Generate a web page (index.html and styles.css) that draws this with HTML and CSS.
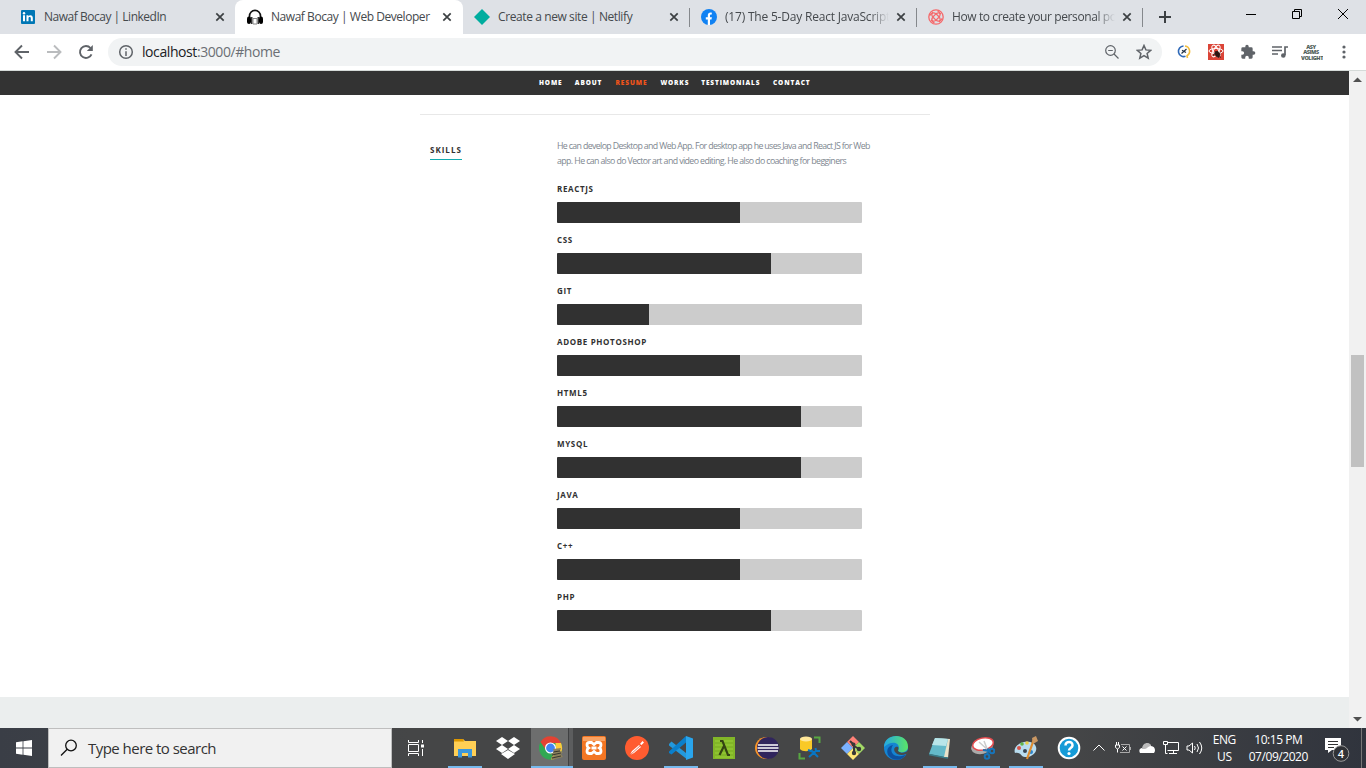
FILE: index.html
```html
<!DOCTYPE html>
<html lang="en">
<head>
<meta charset="utf-8">
<title>Nawaf Bocay | Web Developer</title>
<link rel="stylesheet" href="styles.css">
</head>
<body>
<div class="desktop">
  <header class="tabstrip">
    <div class="tab first">
      <svg class="favicon" viewBox="0 0 16 16"><rect x="1" y="1" width="14" height="14" rx="1" fill="#0077b5"/><path d="M3 6.300h2v6H3zM6.500 6.300h1.900v.9c1-1.600 4.400-1.500 4.400 1.600v3.500h-2V9.100c0-1.600-2.300-1.500-2.300 0v3.200h-2z" fill="#fff"/><circle cx="4" cy="4.300" r="1.200" fill="#fff"/></svg>
      <span class="tab-title t1">Nawaf Bocay | LinkedIn</span>
      <svg class="close" viewBox="0 0 16 16"><path d="M4.300 4.300l7.400 7.400M11.700 4.300l-7.400 7.400"/></svg>
    </div>
    <div class="tab active">
      <svg class="favicon" viewBox="0 0 16 16"><path d="M2.500 9V7a5.500 5.700 0 0 1 11 0v2" fill="none" stroke="#111" stroke-width="1.700"/><rect y="7.500" width="4" height="7.500" rx="2" fill="#000"/><rect x="12" y="7.500" width="4" height="7.500" rx="2" fill="#000"/><path d="M4 8v7h1.500V8zM10.500 8v7H12V8z" fill="#333"/><path d="M6 9.500h4V15H6z" fill="none" stroke="#888"/></svg>
      <span class="tab-title t2">Nawaf Bocay | Web Developer</span>
      <svg class="close" viewBox="0 0 16 16"><path d="M4.300 4.300l7.400 7.400M11.700 4.300l-7.400 7.400"/></svg>
    </div>
    <div class="tab sep">
      <svg class="favicon" viewBox="0 0 16 16"><path d="M8 0l8 8-8 8-8-8z" fill="#00ad9f"/></svg>
      <span class="tab-title t3">Create a new site | Netlify</span>
      <svg class="close" viewBox="0 0 16 16"><path d="M4.300 4.300l7.400 7.400M11.700 4.300l-7.400 7.400"/></svg>
    </div>
    <div class="tab sep">
      <svg class="favicon" viewBox="0 0 16 16"><circle cx="8" cy="8" r="8" fill="#1182f3"/><path d="M6.800 16v-5.500h-2V8.200h2V6.500c0-2.200 1.400-3.200 4-2.800v1.900C9.300 5.500 9 5.800 9 6.800v1.400h1.900l-.4 2.300H9V16z" fill="#fff"/></svg>
      <span class="tab-title fade t4">(17) The 5-Day React JavaScript</span>
      <svg class="close" viewBox="0 0 16 16"><path d="M4.300 4.300l7.400 7.400M11.700 4.300l-7.400 7.400"/></svg>
    </div>
    <div class="tab sep last">
      <svg class="favicon" viewBox="0 0 16 16"><g fill="none" stroke="#f5696b" stroke-width="1.300"><circle cx="8" cy="8" r="7.200"/><path d="M8 4.800L11.200 8 8 11.200 4.800 8z"/><path id="petal" d="M8 4.800C5.500 3 3 4 2 6.500M8 4.800c2-1.500 4-1.200 5 .2"/><use href="#petal" transform="rotate(90 8 8)"/><use href="#petal" transform="rotate(180 8 8)"/><use href="#petal" transform="rotate(270 8 8)"/></g></svg>
      <span class="tab-title fade t5">How to create your personal po</span>
      <svg class="close" viewBox="0 0 16 16"><path d="M4.300 4.300l7.400 7.400M11.700 4.300l-7.400 7.400"/></svg>
    </div>
    <svg class="newtab" viewBox="0 0 16 16"><path d="M8 2v12M2 8h12" stroke="#3c4043" stroke-width="2"/></svg>
    <div class="window-buttons">
      <svg viewBox="0 0 12 12"><path d="M1 6.500h10"/></svg>
      <svg viewBox="0 0 12 12"><path d="M3.500 3.500v-2h7v7h-2M1.500 3.500h7v7h-7z"/></svg>
      <svg viewBox="0 0 12 12"><path d="M1 1l10 10M11 1L1 11"/></svg>
    </div>
  </header>

  <div class="toolbar">
    <div class="history">
      <svg viewBox="0 0 16 16"><path d="M15 8H2M8 1.500L1.500 8 8 14.500"/></svg>
      <svg class="disabled" viewBox="0 0 16 16"><path d="M1 8h13M8 1.500L14.500 8 8 14.500"/></svg>
      <svg viewBox="0 0 16 16"><path d="M13.500 10.300A6 6 0 1 1 12.500 4"/><path d="M14.800 1v6h-6z" fill="#5f6368" stroke="none"/></svg>
    </div>
    <div class="omnibox">
      <svg class="info" viewBox="0 0 16 16"><circle cx="8" cy="8" r="6.300"/><path d="M8 7.200V12M8 4.200v1.600"/></svg>
      <span class="url"><b>localhost</b>:3000/#home</span>
      <svg class="lens" viewBox="0 0 16 16"><circle cx="6.500" cy="6.500" r="4.800"/><path d="M10 10l4.500 4.500M4.200 6.500h4.600"/></svg>
      <svg class="star" viewBox="0 0 16 16"><path d="M8 1.500l1.900 4.400 4.800.4-3.600 3.200 1.100 4.700L8 11.700l-4.200 2.500 1.100-4.700-3.600-3.200 4.800-.4z"/></svg>
    </div>
    <div class="extensions">
      <svg viewBox="0 0 16 16"><g fill="none" stroke-width="1.600"><path d="M7.500 2A5.300 5.300 0 1 0 9.500 12.300" stroke="#2d68b8"/><path d="M9 2a5.300 5.300 0 0 1 2 9.800l.5 2.200" stroke="#f3bd3c"/></g><path d="M5.500 9.500l5-4.500M6 6.200l4 2.300" stroke="#25364a" stroke-width="1.200"/></svg>
      <svg viewBox="0 0 16 16"><path d="M0 0h16v16H0z" fill="#db4437"/><g fill="none" stroke="#fff" stroke-width="1"><ellipse cx="8" cy="7" rx="7" ry="2.600"/><ellipse cx="8" cy="7" rx="6.500" ry="2.600" transform="rotate(60 8 7)"/><ellipse cx="8" cy="7" rx="6.500" ry="2.600" transform="rotate(120 8 7)"/></g><path d="M7.500 7.500h2.500l2 2.500-1 3.500-2.500-1-2-2.500zM6 10l-1 2M12 8.500l1-1M11.500 12.500l1.500 1" fill="#2b1512" stroke="#2b1512" stroke-width=".8"/></svg>
      <svg viewBox="0 0 24 24"><path fill="#5f6368" d="M20.500 11H19V7a2 2 0 0 0-2-2h-4V3.500a2.500 2.500 0 0 0-5 0V5H4a2 2 0 0 0-2 2v3.800h1.500a2.700 2.700 0 0 1 0 5.400H2V20a2 2 0 0 0 2 2h3.800v-1.500a2.700 2.700 0 0 1 5.400 0V22H17a2 2 0 0 0 2-2v-4h1.500a2.500 2.500 0 0 0 0-5z"/></svg>
      <svg viewBox="0 0 16 16"><path d="M0 3h10M0 6.500h10M0 10h6M13 11V3h3" fill="none" stroke="#5f6368" stroke-width="1.700"/><circle cx="11.300" cy="11.500" r="2.300" fill="#5f6368"/></svg>
      <svg class="avatar" viewBox="0 0 22 20"><text x="10" y="6.500">ASY</text><text x="10" y="12">ASIMS</text><text x="11" y="17.500">VOLIGHT</text></svg>
      <svg viewBox="0 0 16 16"><g fill="#5f6368"><circle cx="8" cy="3" r="1.600"/><circle cx="8" cy="8" r="1.600"/><circle cx="8" cy="13" r="1.600"/></g></svg>
    </div>
  </div>

  <div class="viewport">
    <main class="page">
      <nav class="nav">
        <a style="width:23px">HOME</a><a style="width:28px">ABOUT</a><a class="current" style="width:32px">RESUME</a><a style="width:28px">WORKS</a><a style="width:59px">TESTIMONIALS</a><a style="width:37px">CONTACT</a>
      </nav>
      <section class="skills">
        <h1><span>SKILLS</span></h1>
        <div class="skills-main">
          <p><span class="l1">He can develop Desktop and Web App. For desktop app he uses Java and React JS for Web</span><br><span class="l2">app. He can also do Vector art and video editing. He also do coaching for begginers</span></p>
          <ul>
            <li><em>REACTJS</em><div class="bar"><i style="width:60%"></i></div></li>
            <li><em>CSS</em><div class="bar"><i style="width:70%"></i></div></li>
            <li><em>GIT</em><div class="bar"><i style="width:30%"></i></div></li>
            <li><em>ADOBE PHOTOSHOP</em><div class="bar"><i style="width:60%"></i></div></li>
            <li><em>HTML5</em><div class="bar"><i style="width:80%"></i></div></li>
            <li><em>MYSQL</em><div class="bar"><i style="width:80%"></i></div></li>
            <li><em>JAVA</em><div class="bar"><i style="width:60%"></i></div></li>
            <li><em>C++</em><div class="bar"><i style="width:60%"></i></div></li>
            <li><em>PHP</em><div class="bar"><i style="width:70%"></i></div></li>
          </ul>
        </div>
      </section>
      <div class="next-section"></div>
    </main>
    <div class="scrollbar">
      <svg viewBox="0 0 17 17"><path d="M4 11h9L8.500 6.500z" fill="#505050"/></svg>
      <div class="thumb"></div>
      <svg class="down" viewBox="0 0 17 17"><path d="M4 6h9l-4.500 4.500z" fill="#505050"/></svg>
    </div>
  </div>

  <footer class="taskbar">
    <div class="start"><svg viewBox="0 0 16 16"><path d="M0 2.300L6.600 1.300V7.600H0zM7.400 1.200L16 0v7.600H7.400zM0 8.400h6.600v6.300L0 13.800zM7.400 8.400H16V16l-8.600-1.200z" fill="#fff"/></svg></div>
    <div class="search">
      <svg viewBox="0 0 18 18"><circle cx="11" cy="6.500" r="5.300"/><path d="M7.200 10.300L1 16.500"/></svg>
      <span>Type here to search</span>
    </div>
    <div class="taskview"><svg viewBox="0 0 18 16"><path d="M1.500 0v2.500h10V0M1.500 16v-2.500h10V16M1.500 4.500h10v7h-10zM15.500 0v3M15.500 9v7" fill="none" stroke="#fff"/><path d="M14 4.500h3v3h-3z" fill="#fff"/></svg></div>
    <div class="apps">
      <div class="app run"><svg viewBox="0 0 24 24"><path d="M1 3h9l2 2h11v15H1z" fill="#ffcf55"/><path d="M1 3h9l1 2.500H1z" fill="#dd9700"/><path d="M5 13h14v8.500h-4V17H9v4.500H5z" fill="#3b97dc"/></svg></div>
      <div class="app"><svg viewBox="0 0 24 24"><path d="M6 1l6 4-6 4-6-4zM18 1l6 4-6 4-6-4zM6 9l6 4-6 4-6-4zM18 9l6 4-6 4-6-4zM12 14l7 4-7 5-7-5z" fill="#fff"/></svg></div>
      <div class="app run chrome"><svg viewBox="0 0 24 24"><circle cx="11.500" cy="12" r="11.500" fill="#31a853"/><path d="M1.500 6A11.500 11.500 0 0 1 22 7H12l-5 7z" fill="#e34234"/><path d="M22 7a11.500 11.500 0 0 1-10 16.500L16.500 14V7z" fill="#fbcb3b"/><circle cx="11.500" cy="12" r="5.500" fill="#fff"/><circle cx="11.500" cy="12" r="4.400" fill="#4285f4"/><path d="M14 13l8-1-1 3 3 1-2 2 2 3-11 3-1-3 3-1-3-2 3-2z" fill="#8b805c"/><path d="M14 16l7-1M13 19l9-2M13 22l9-2" stroke="#38392f"/></svg></div>
      <div class="app"><svg viewBox="0 0 24 24"><rect width="24" height="24" rx="2" fill="#f37623"/><path d="M1 1h22v4H1z" fill="#f9a263"/><path d="M7.500 6.500h2l2.500 2 2.500-2h2q2.500 0 2.500 2.500 0 2-1.500 3 1.500 1 1.500 3 0 2.500-2.500 2.500h-2l-2.500-2-2.500 2h-2Q5 17.500 5 15q0-2 1.500-3Q5 11 5 9q0-2.500 2.500-2.500zM9.500 12h5" fill="none" stroke="#fff" stroke-width="2.800"/></svg></div>
      <div class="app"><svg viewBox="0 0 24 24"><circle cx="12" cy="12" r="12" fill="#ff5c30"/><path d="M5 19l2-4 7-6 2 2-7 6zM15 8l2.500-3 1.500 1.500L16.500 9z" fill="#fff"/><path d="M5 19l11-10" stroke="#e54320" stroke-width=".7"/></svg></div>
      <div class="app run"><svg viewBox="0 0 24 24"><path d="M0 8l2.500-2.500L17 17v5.500L0 9.500z" fill="#2398dc"/><path d="M0 15.500L17 0v6.500L2.500 18.500 0 17z" fill="#0a7fcb"/><path d="M17 0l7 2.500v19L17 24z" fill="#29a5ed"/></svg></div>
      <div class="app"><svg viewBox="0 0 24 24"><path d="M1 1h22v22H1z" fill="#82b628"/><path d="M3 5h18M3 9h18M3 13h18M3 17h18M3 21h18" stroke="#9bd039"/><path d="M8 5h2.500L16 19h2M12 10L7.500 19" fill="none" stroke="#344313" stroke-width="2.200"/></svg></div>
      <div class="app"><svg viewBox="0 0 24 24"><circle cx="11" cy="12" r="11" fill="#f79428"/><circle cx="13" cy="12" r="11" fill="#30255d"/><path d="M3 9h20M2.500 12h21M3 15h20" stroke="#fff" stroke-width="1.700"/></svg></div>
      <div class="app"><svg viewBox="0 0 24 24"><path d="M2 3v10c2 3 10 3 12 0V3z" fill="#f9c927"/><ellipse cx="8" cy="3" rx="6" ry="2.500" fill="#ffe799"/><path d="M16 1.500h5.500V7M1.500 17v5.500H7" fill="none" stroke="#58a742" stroke-width="2"/><path d="M11 21l8-7M13 14l7 7M17.500 12l.5 3 4 0M10 14l4 1.500" fill="none" stroke="#0876c5" stroke-width="2"/></svg></div>
      <div class="app"><svg viewBox="0 0 24 24"><path d="M12 0l6 6-6 6-6-6z" fill="#ff8178"/><path d="M6 6l6 6-6 6-6-6z" fill="#7bb1ff"/><path d="M18 6l6 6-6 6-6-6z" fill="#a3d967"/><path d="M12 12l6 6-6 6-6-6z" fill="#ffe676"/><path d="M9 5l4 4v9M13 10l5 3" fill="none" stroke="#383838" stroke-width="2"/><g fill="#383838"><circle cx="12.500" cy="8.500" r="2"/><circle cx="13" cy="17" r="2.200"/><circle cx="18" cy="13" r="2.200"/></g></svg></div>
      <div class="app"><svg viewBox="0 0 24 24"><defs><linearGradient id="edge"><stop stop-color="#24a8e4"/><stop offset="1" stop-color="#5be565"/></linearGradient></defs><circle cx="12" cy="12" r="12" fill="#1585d2"/><path d="M0 11C0-3 24-4 24 11c0 5-7 7-10 4 4-8-6-12-14-4z" fill="url(#edge)"/><path d="M9 9c-5 8 2 14 12 10l1-1c-3 7-14 8-18 1-2-5 0-9 5-10z" fill="#0d519f"/><path d="M14 15c3 3 8 2 10-1v4l-2 0c-4 2-9 1-11-2-2-3 0-6 3-5 1 1 0 2 0 4z" fill="#46494b"/></svg></div>
      <div class="app run"><svg viewBox="0 0 24 24"><path d="M7 2l15 1-2 19-4-1z" fill="#e9e1c9"/><path d="M7 2l13 1-4 18-15-3z" fill="#64b9c9"/><path d="M7 2l13 1-2 7-14-1z" fill="#b9e5e9"/><path d="M1 18.500l15 3 4 .5" fill="none" stroke="#397a87" stroke-width="1.300"/></svg></div>
      <div class="app run"><svg viewBox="0 0 24 24"><ellipse cx="11" cy="11" rx="11" ry="7" transform="rotate(-12 11 11)" fill="#aaa"/><ellipse cx="12" cy="8" rx="10.500" ry="6" transform="rotate(-12 12 8)" fill="#fff" stroke="#e64b4f" stroke-width="1.500"/><path d="M13 5l4 10M8 6l9 8" stroke="#ccc" stroke-width="1.500"/><g fill="none" stroke="#1774b9" stroke-width="2"><circle cx="21" cy="15" r="2.300"/><circle cx="16" cy="20.500" r="2.300"/><path d="M12 14l7 1M16.500 18.500l.5-6"/></g></svg></div>
      <div class="app run"><svg viewBox="0 0 24 24"><path d="M1 17c-3-8 10-14 18-10 8 6 0 15-8 14-5 0-3-5-10-4z" fill="#b8dcef"/><g><circle cx="5" cy="12" r="2" fill="#d95449"/><circle cx="8" cy="8" r="1.800" fill="#63b549"/><circle cx="13" cy="7" r="1.800" fill="#ebcf47"/><circle cx="11" cy="15" r="2" fill="#384553"/><circle cx="17" cy="16" r="2" fill="#2b85cf"/></g><path d="M20 3l-7 20" stroke="#dd8b2e" stroke-width="2.200"/><path d="M18 2l4-2 2 5-5 3z" fill="#c99763"/></svg></div>
      <div class="app"><svg viewBox="0 0 24 24"><circle cx="12" cy="12" r="10.300" fill="#159bd7" stroke="#fff" stroke-width="2"/><path d="M8.500 9.500c0-5 7.500-4.500 7 0-.3 2.500-3.500 2.500-3.500 5" fill="none" stroke="#fff" stroke-width="2.500"/><circle cx="12" cy="17.500" r="1.600" fill="#fff"/></svg></div>
    </div>
    <div class="tray">
      <svg class="chev" viewBox="0 0 12 12"><path d="M.5 8.500L6 3l5.500 5.500"/></svg>
      <svg class="power" viewBox="0 0 16 12"><path d="M6 2.500h8.500v8H5M15.500 5v3" stroke="#aaa"/><path d="M.5 3h4v2.500l-2 1.500-2-1.500zM1.500 0v3M3.500 0v3M2.500 7v3.500M7.500 4.500l4 4M11.500 4.500l-4 4"/></svg>
      <svg class="cloud" viewBox="0 0 16 12"><path d="M1 11c-2-4 1-5 3-5 1-6 8-5 8-2 4 0 5 5 3 7z" fill="#fff"/><path d="M3 7c0-7 8-8 9-3-3 0-4 3-6 3z" fill="#bbb"/></svg>
      <svg class="net" viewBox="0 0 16 14"><path d="M5 1.500h10.500v8h-11M6 12.500h8M10.500 9.500v3M.5.500h4v3h-4zM2.500 3.500v9h2"/></svg>
      <svg class="sound" viewBox="0 0 16 14"><path d="M.5 5h2L6 2v10L2.500 9h-2zM8 5q1.500 2 0 4M10.500 3q3 4 0 8M13 1q4.500 6 0 12"/></svg>
      <div class="lang"><span>ENG</span><span>US</span></div>
      <div class="clock"><span>10:15 PM</span><span>07/09/2020</span></div>
      <div class="notice"><svg viewBox="0 0 26 26"><path d="M0 1h16v12H7l-4 3v-3H0z" fill="#fff"/><path d="M3 4.500h10M3 7.500h10M3 10.500h6" stroke="#333"/><circle cx="16" cy="16.500" r="7.800" fill="#303236" stroke="#999"/><text x="16" y="20.500">4</text></svg></div>
      <div class="peek"></div>
    </div>
  </footer>
</div>
</body>
</html>
```
FILE: styles.css
```css
* { box-sizing: border-box; }
body { margin: 0; font-family: "Open Sans", "Noto Sans", sans-serif; overflow: hidden; }
svg { display: block; flex: none; }
.desktop { width: 1366px; height: 768px; display: flex; flex-direction: column; background: #fff; }

.tabstrip { height: 34px; display: flex; background: #dee1e6; padding-left: 8px; flex: none; }
.tab { width: 227px; height: 34px; display: flex; align-items: center; padding: 0 7px 0 12px; border-right: 1px solid transparent; }
.tab.first { padding-right: 6px; }
.tab.active { background: #fff; border-radius: 8px 8px 0 0; width: 228px; padding-right: 7px; }
.tab.sep { background: linear-gradient(#85888c, #85888c) right 8px / 1px 19px no-repeat; background-origin: border-box; }
.tab.sep + .tab.sep, .tab.active + .tab { padding-left: 11px; }
.tab.last { width: 226px; }
.favicon { width: 16px; height: 16px; margin-right: 8px; }
.tab-title { flex: 1; font-size: 12px; line-height: 16px; color: #45494d; white-space: nowrap; margin-right: 4px; min-width: 0; }
.fade { -webkit-mask-image: linear-gradient(90deg, #000 88%, transparent); mask-image: linear-gradient(90deg, #000 88%, transparent); }
.t1 { letter-spacing: -.48px; }
.t2 { letter-spacing: -.45px; }
.t3 { letter-spacing: -.4px; }
.t4 { letter-spacing: -.2px; }
.t5 { letter-spacing: -.4px; }
.close { width: 16px; height: 16px; stroke: #3c4043; stroke-width: 1.7; }
.newtab { width: 16px; height: 16px; margin: 9px 0 0 14px; }
.window-buttons { display: flex; gap: 34px; margin: 8px 0 0 72px; }
.window-buttons svg { width: 12px; height: 12px; fill: none; stroke: #000; }

.toolbar { height: 37px; display: flex; align-items: center; border-bottom: 1px solid #d5dad8; flex: none; }
.history { display: flex; gap: 16px; padding-left: 14px; width: 108px; }
.history svg { width: 16px; height: 16px; fill: none; stroke: #5f6368; stroke-width: 1.9; }
.history .disabled { stroke: #babcbe; }
.omnibox { width: 1054px; height: 28px; display: flex; align-items: center; border-radius: 14px; background: #f1f3f4; padding-left: 10px; }
.omnibox svg { width: 16px; height: 16px; fill: none; stroke: #5f6368; stroke-width: 1.5; }
.url { flex: 1; margin-left: 8px; font-size: 14px; line-height: 20px; color: #6b6f74; letter-spacing: -.42px; }
.url b { font-weight: 400; color: #202124; }
.omnibox .lens { margin-right: 16px; stroke-width: 1.2; }
.star { margin-right: 10px; }
.extensions { display: flex; align-items: center; gap: 16px; margin-left: 14px; }
.extensions svg { width: 16px; height: 16px; }
.extensions .avatar { width: 22px; height: 20px; margin: 0 -3px; }
.avatar text { font: 800 5.5px "Open Sans", sans-serif; fill: #52615a; text-anchor: middle; letter-spacing: -.4px; }

.viewport { flex: 1; min-height: 0; display: flex; }
.page { width: 1349px; display: flex; flex-direction: column; }
.nav { height: 24px; background: #333; display: flex; gap: 12.8px; padding-left: 539px; flex: none; }
.nav a { font-size: 6.5px; line-height: 23px; font-weight: 800; letter-spacing: .88px; color: #fff; white-space: nowrap; }
.nav .current { color: #f0541a; }
.skills { width: 510px; height: 583px; margin: 19px 0 0 420px; border-top: 1px solid #e8e8e8; display: flex; flex: none; }
.skills h1 { width: 137px; margin: 0; padding: 27px 0 0 10px; font-size: 8px; line-height: 15px; letter-spacing: 1px; }
.skills h1 span { display: inline-block; border-bottom: 1px solid #11abb0; height: 18px; width: 32px; color: #313131; }
.skills-main { width: 330px; }
.skills p { margin: 24px 0 0; font-size: 8.8px; line-height: 15px; color: #7e8790; white-space: nowrap; }
.l1 { letter-spacing: -.642px; }
.l2 { letter-spacing: -.6px; }
.skills ul { list-style: none; margin: 12px 0 0; padding: 0; width: 305px; }
.skills li { height: 51px; }
.skills em { display: block; height: 21px; font: 700 8px/15px "Open Sans", sans-serif; letter-spacing: .65px; color: #313131; }
.bar { height: 21px; background: #ccc; border-radius: 1px; overflow: hidden; }
.bar i { display: block; height: 21px; background: #313131; }
.next-section { flex: 1; background: #ebeeee; }
.scrollbar { width: 17px; background: #f1f1f1; display: flex; flex-direction: column; }
.scrollbar svg { width: 17px; height: 17px; }
.scrollbar .down { margin-top: auto; }
.thumb { width: 13px; height: 112px; margin: 267px 0 0 2px; background: #c1c1c1; flex: none; }

.taskbar { height: 40px; display: flex; background: linear-gradient(90deg, #3a3e46, #454647 30%, #454647 78%, #30343d); color: #fff; flex: none; }
.start { width: 48px; padding: 12px 16px; }
.start svg { width: 16px; height: 16px; }
.search { width: 344px; display: flex; align-items: center; background: #f1f1f1; border: 1px solid #bebebe; padding-left: 11px; color: #333; font-size: 15px; }
.search svg { width: 18px; height: 18px; margin-right: 10px; fill: none; stroke: #111; stroke-width: 1.3; }
.search span { letter-spacing: -.53px; }
.taskview { width: 51px; padding: 12px 0 0 15px; }
.taskview svg { width: 18px; height: 16px; }
.apps { display: flex; }
.app { width: 43.2px; display: flex; justify-content: center; align-items: center; }
.app svg { width: 24px; height: 24px; }
.run { background: linear-gradient(#76b9ed, #76b9ed) 50% 100% / 34px 2px no-repeat; }
.chrome { background: linear-gradient(#76b9ed, #76b9ed) 1.6px 100% / 42px 2px no-repeat, linear-gradient(90deg, transparent 1.6px, #6d6e6e 1.6px 39px, #404142 39px 40px, #5c5d5e 40px); }
.tray { flex: 1; display: flex; align-items: center; }
.tray > svg { fill: none; stroke: #fff; }
.chev { width: 12px; height: 12px; margin-left: 2px; }
.power { width: 16px; height: 12px; margin-left: 10px; }
.tray > .cloud { width: 16px; height: 12px; margin-left: 8px; stroke: none; }
.net { width: 16px; height: 14px; margin-left: 8px; }
.sound { width: 17px; height: 14px; margin-left: 7px; }
.lang, .clock { display: flex; flex-direction: column; align-items: center; font-size: 12px; line-height: 17px; letter-spacing: -.45px; }
.lang { width: 43px; }
.clock { width: 65px; }
.notice { margin-left: 14px; padding-top: 4px; }
.notice svg { width: 26px; height: 26px; }
.notice text { font: 600 11px "Open Sans", sans-serif; fill: #fff; text-anchor: middle; }
.peek { width: 1px; height: 40px; background: #777; margin-left: auto; margin-right: 4px; }
```
